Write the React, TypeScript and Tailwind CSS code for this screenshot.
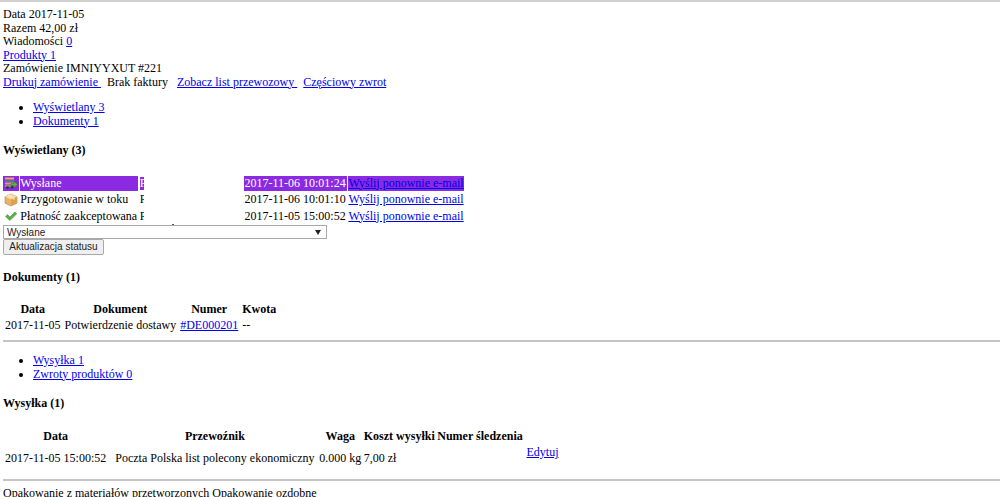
const Link = ({ children }: { children: React.ReactNode }) => (
  <a href="#" className="text-[#0000ee] underline">
    {children}
  </a>
);

const TruckIcon = () => (
  <svg width="14" height="14" viewBox="0 0 14 14" className="block">
    <rect x="1" y="1.5" width="9" height="2" fill="#e8b04a" />
    <rect x="1" y="4" width="9" height="2" fill="#5f6ea0" />
    <rect x="1" y="6.5" width="9" height="2" fill="#c9a86a" />
    <rect x="1" y="9" width="6" height="2" fill="#8a8f70" />
    <circle cx="3.5" cy="11.5" r="1.3" fill="#333" />
    <circle cx="8" cy="11.5" r="1.3" fill="#333" />
    <path d="M7 7.5h3V5.5L13.5 8.5 10 11.5V9.5H7z" fill="#5fb544" stroke="#2f7d23" strokeWidth="0.5" />
  </svg>
);

const BoxIcon = () => (
  <svg width="14" height="14" viewBox="0 0 14 14" className="block">
    <path d="M7 1 13 3.8V10.2L7 13 1 10.2V3.8Z" fill="#e9b267" stroke="#b98440" strokeWidth="0.6" />
    <path d="M1 3.8 7 6.6 13 3.8 7 1Z" fill="#f7dca8" />
    <path d="M7 6.6V13L13 10.2V3.8Z" fill="#dd9f50" />
    <path d="M4 2.4 10 5.2V7" fill="none" stroke="#fbeed0" strokeWidth="0.9" />
  </svg>
);

const CheckIcon = () => (
  <svg width="14" height="14" viewBox="0 0 14 14" className="block">
    <path d="M1.5 7.5 3.6 5.6 5.8 8 11 3 12.8 4.8 5.8 11.5Z" fill="#5cb048" stroke="#3f8f34" strokeWidth="0.5" />
  </svg>
);

const history = [
  { icon: <TruckIcon />, status: 'Wysłane', date: '2017-11-06 10:01:24', active: true },
  { icon: <BoxIcon />, status: 'Przygotowanie w toku', date: '2017-11-06 10:01:10', active: false },
  { icon: <CheckIcon />, status: 'Płatność zaakceptowana', date: '2017-11-05 15:00:52', active: false },
];

const tableCls = 'border-separate border-spacing-[1.5px]';
const thCls = 'p-[0.75px] font-bold text-center';
const tdCls = 'p-[0.75px] whitespace-nowrap';

export default function App() {
  return (
    <div className="h-[497px] overflow-hidden bg-white text-black text-[12px] leading-[13.5px] font-['Liberation_Serif',serif]">
      <hr className="border-0 h-[2px] bg-[#d0d0d0]" />

      <div className="px-[3px] pt-[6px]">
        <div>Data 2017-11-05</div>
        <div>Razem 42,00 zł</div>
        <div>
          Wiadomości <Link>0</Link>
        </div>
        <div>
          <Link>Produkty 1</Link>
        </div>
        <div>Zamówienie IMNIYYXUT #221</div>
        <div className="flex">
          <Link>Drukuj zamówienie&nbsp;</Link>
          <span className="ml-[6px]">Brak faktury</span>
          <span className="ml-[9px]">
            <Link>Zobacz list przewozowy&nbsp;</Link>
          </span>
          <span className="ml-[6px]">
            <Link>Częściowy zwrot</Link>
          </span>
        </div>

        <ul className="list-disc pl-[30px] mt-[12px]">
          <li>
            <Link>Wyświetlany 3</Link>
          </li>
          <li>
            <Link>Dokumenty 1</Link>
          </li>
        </ul>

        <h2 className="font-bold mt-[16px]">Wyświetlany (3)</h2>

        <div className="relative mt-[17px]">
          <table className={`${tableCls} -ml-px`}>
            <tbody>
              {history.map((row) => (
                <tr key={row.date} className="h-[14.5px]">
                  <td className={`${tdCls} ${row.active ? 'bg-[#8a2be2]' : ''}`}>{row.icon}</td>
                  <td className={`${tdCls} ${row.active ? 'bg-[#8a2be2] text-white' : ''}`}>{row.status}</td>
                  <td className={tdCls}>
                    <div className="w-[103px]">
                      <div className={`w-[4px] overflow-hidden ${row.active ? 'bg-[#8a2be2] text-white' : ''}`}>P</div>
                    </div>
                  </td>
                  <td className={`py-[0.75px] pl-0 pr-px whitespace-nowrap ${row.active ? 'bg-[#8a2be2] text-white' : ''}`}>
                    {row.date}
                  </td>
                  <td className={`${tdCls} ${row.active ? 'bg-[#8a2be2]' : ''}`}>
                    <Link>Wyślij ponownie e-mail</Link>
                  </td>
                </tr>
              ))}
            </tbody>
          </table>
          {/* leftover speck next to the blanked-out column */}
          <span className="absolute left-[169px] bottom-0 w-[2px] h-px bg-[#555]" />
        </div>

        <div className="relative w-[324px]">
          <select className="block appearance-none w-full h-[14px] pl-[3px] border border-[#a9a9a9] text-[10px] font-['Liberation_Sans',sans-serif] text-[#222]">
            <option>Wysłane</option>
          </select>
          <span className="absolute right-[6px] top-[5px] w-0 h-0 border-x-[3px] border-x-transparent border-t-[5px] border-t-[#222]" />
        </div>
        <button className="block w-[101px] h-[16px] rounded-[2px] border border-[#a9a9a9] bg-[#efefef] text-[10px] font-['Liberation_Sans',sans-serif] text-[#222]">
          Aktualizacja statusu
        </button>

        <h2 className="font-bold mt-[16px]">Dokumenty (1)</h2>

        <table className="border-separate border-spacing-[2px] -ml-px mt-[15px]">
          <thead>
            <tr>
              <th className="p-px font-bold text-center">Data</th>
              <th className="p-px font-bold text-center">Dokument</th>
              <th className="p-px font-bold text-center">Numer</th>
              <th className="p-px font-bold text-center">Kwota</th>
            </tr>
          </thead>
          <tbody>
            <tr>
              <td className="p-px pt-0 whitespace-nowrap">2017-11-05</td>
              <td className="p-px pt-0 whitespace-nowrap">Potwierdzenie dostawy</td>
              <td className="p-px pt-0 whitespace-nowrap">
                <Link>#DE000201</Link>
              </td>
              <td className="p-px pt-0 whitespace-nowrap">--</td>
            </tr>
          </tbody>
        </table>
      </div>

      <hr className="border-0 h-[2px] bg-[#c4c4c4] ml-[3px] mt-[4px]" />

      <div className="px-[3px]">
        <ul className="list-disc pl-[30px] mt-[12.5px]">
          <li>
            <Link>Wysyłka 1</Link>
          </li>
          <li>
            <Link>Zwroty produktów 0</Link>
          </li>
        </ul>

        <h2 className="font-bold mt-[16px]">Wysyłka (1)</h2>

        <table className={`${tableCls} mt-[18px]`}>
          <thead>
            <tr>
              <th className={`${thCls} pl-px pr-[5px]`}>Data</th>
              <th className={thCls}>Przewoźnik</th>
              <th className={thCls}>Waga</th>
              <th className={thCls}>Koszt wysyłki</th>
              <th className={thCls}>Numer śledzenia</th>
              <th className={thCls}></th>
            </tr>
          </thead>
          <tbody>
            <tr className="h-[26px]">
              <td className={`${tdCls} pl-px pr-[5px]`}>2017-11-05 15:00:52</td>
              <td className={`${tdCls} px-[3px]`}>Poczta Polska list polecony ekonomiczny</td>
              <td className={tdCls}>0.000 kg</td>
              <td className={tdCls}>7,00 zł</td>
              <td className={tdCls}></td>
              <td className={`${tdCls} pl-[2px] align-top`}>
                <Link>Edytuj</Link>
              </td>
            </tr>
          </tbody>
        </table>
      </div>

      <hr className="border-0 h-[2px] bg-[#c4c4c4] ml-[3px] mt-[6px]" />

      <div className="px-[3px] mt-[6px]">Opakowanie z materiałów przetworzonych Opakowanie ozdobne</div>
    </div>
  );
}
